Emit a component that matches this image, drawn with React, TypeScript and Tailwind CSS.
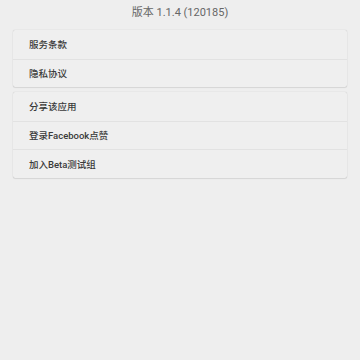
import React from "react";

const font = { fontFamily: '"Roboto", "Noto Sans CJK SC", sans-serif' };

function Card({ items }: { items: string[] }) {
  return (
    <div className="mx-[13px] bg-[#efefef] rounded-[2px] shadow-[0_0_1px_rgba(0,0,0,0.25),0_1px_1px_rgba(0,0,0,0.08)]">
      {items.map((t, i) => (
        <div
          key={t}
          className={`h-[28.5px] flex items-center pl-[16px] pt-[2px] text-[9.5px] font-medium text-[#3a3a3a] ${
            i > 0 ? "border-t border-[#e2e2e2]" : ""
          }`}
        >
          {t}
        </div>
      ))}
    </div>
  );
}

export default function App() {
  return (
    <div className="w-[360px] h-[360px] bg-[#eeeeee] flex flex-col" style={font}>
      <div className="h-[26px] flex items-center justify-center text-[11px] text-[#666666]">
        版本 1.1.4 (120185)
      </div>
      <div className="mt-[4px]">
        <Card items={["服务条款", "隐私协议"]} />
      </div>
      <div className="mt-[5px]">
        <Card items={["分享该应用", "登录Facebook点赞", "加入Beta测试组"]} />
      </div>
    </div>
  );
}
